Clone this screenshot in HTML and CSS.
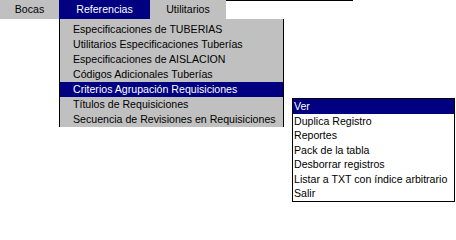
FILE: index.html
```html
<!DOCTYPE html>
<html>
<head>
<meta charset="utf-8">
<link rel="stylesheet" href="styles.css">
</head>
<body>
<div class="screen">
  <div class="top">
    <nav class="menubar">
      <div class="mitem w-bocas">Bocas</div>
      <div class="mitem w-ref active">Referencias</div>
      <div class="mitem w-util">Utilitarios</div>
    </nav>
    <div class="topline"></div>
  </div>
  <ul class="dropdown">
    <li>Especificaciones de TUBERIAS</li>
    <li>Utilitarios Especificaciones Tuberías</li>
    <li>Especificaciones de AISLACION</li>
    <li>Códigos Adicionales Tuberías</li>
    <li class="sel">Criterios Agrupación Requisiciones</li>
    <li>Títulos de Requisiciones</li>
    <li>Secuencia de Revisiones en Requisiciones</li>
  </ul>
  <ul class="submenu">
    <li class="sel">Ver</li>
    <li>Duplica Registro</li>
    <li>Reportes</li>
    <li>Pack de la tabla</li>
    <li>Desborrar registros</li>
    <li>Listar a TXT con índice arbitrario</li>
    <li>Salir</li>
  </ul>
</div>
</body>
</html>
```

FILE: styles.css
```css
html, body {
  margin: 0;
  padding: 0;
  background: #ffffff;
}
body {
  font-family: "Liberation Sans", Arial, sans-serif;
  font-size: 10.6px;
  color: #000000;
}
.screen {
  position: relative;
  width: 456px;
  height: 203px;
  overflow: hidden;
}
.top {
  display: flex;
  align-items: flex-start;
}
.menubar {
  display: flex;
  height: 19px;
  background: #c0c0c0;
}
.mitem {
  line-height: 19px;
  text-align: center;
}
.w-bocas { width: 59px; }
.w-ref { width: 91px; }
.w-util { width: 76px; }
.mitem.active {
  background: #000080;
  color: #ffffff;
}
.topline {
  width: 127px;
  height: 1px;
  background: #000000;
}
.dropdown {
  position: absolute;
  left: 59px;
  top: 19px;
  width: 223px;
  margin: 0;
  padding: 3px 0 0 0;
  list-style: none;
  background: #c0c0c0;
  border-left: 1px solid #000000;
  border-right: 1px solid #000000;
}
.dropdown li {
  height: 15px;
  line-height: 15px;
  padding-left: 13px;
  white-space: nowrap;
}
.submenu {
  position: absolute;
  left: 292px;
  top: 98px;
  width: 161px;
  margin: 0;
  padding: 0;
  list-style: none;
  background: #ffffff;
  border: 1px solid #000000;
}
.submenu li {
  height: 14.5px;
  line-height: 14.5px;
  padding-left: 1px;
  white-space: nowrap;
}
.sel {
  background: #000080;
  color: #ffffff;
}
```
